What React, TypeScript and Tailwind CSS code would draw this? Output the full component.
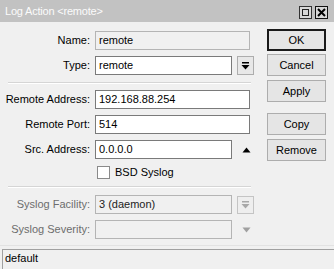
export default function App() {
  const font = { fontFamily: '"Liberation Sans", Arial, sans-serif' }

  const label = "w-[86px] shrink-0 text-right whitespace-nowrap pr-[1px] leading-none"
  const field = "h-[19px] border flex items-center px-[3px] leading-none"

  return (
    <div
      className="w-[334px] h-[269px] bg-[#f0f0f0] text-[11px] text-black flex flex-col overflow-hidden"
      style={font}
    >
      {/* title bar */}
      <div className="h-[22px] bg-[#c2c2c2] flex items-center pl-[5px] pr-[6px] shrink-0">
        <span className="text-[11px] text-[#fbfbfb] tracking-[-0.2px]">Log Action &lt;remote&gt;</span>
        <div className="ml-auto flex gap-[3px] pt-[2px]">
          <div className="w-[13px] h-[13px] border border-[#333] bg-[#d8d8d8] flex items-center justify-center">
            <div className="w-[7px] h-[7px] border border-[#222]" />
          </div>
          <div className="w-[13px] h-[13px] border border-[#111] bg-[#d8d8d8] flex items-center justify-center">
            <svg width="9" height="9" viewBox="0 0 9 9">
              <path d="M1 1L8 8M8 1L1 8" stroke="#000" strokeWidth="2" />
            </svg>
          </div>
        </div>
      </div>

      <div className="flex flex-1">
        {/* form */}
        <div className="w-[258px] pl-[5px] pt-[9px] flex flex-col">
          <div className="flex items-center gap-[4px]">
            <span className={label}>Name:</span>
            <div className={`${field} w-[155px] bg-[#f0f0f0] border-[#b4b4b4]`}>remote</div>
          </div>
          <div className="flex items-center gap-[4px] mt-[6px]">
            <span className={label}>Type:</span>
            <div className={`${field} w-[137px] bg-white border-[#7a7a7a]`}>remote</div>
            <div className="ml-[1px] w-[17px] h-[19px] border border-[#adadad] bg-[#e8e8e8] flex items-center justify-center">
              <svg width="9" height="8" viewBox="0 0 9 8">
                <rect x="1" y="0" width="7" height="1.5" fill="#000" />
                <path d="M0.5 3H8.5L4.5 7.5Z" fill="#000" />
              </svg>
            </div>
          </div>

          <div className="mt-[7px] ml-[3px] mr-[7px] border-t border-[#d5d5d5] border-b border-b-white" />

          <div className="flex items-center gap-[4px] mt-[6px]">
            <span className={label}>Remote Address:</span>
            <div className={`${field} w-[155px] bg-white border-[#7a7a7a]`}>192.168.88.254</div>
          </div>
          <div className="flex items-center gap-[4px] mt-[6px]">
            <span className={label}>Remote Port:</span>
            <div className={`${field} w-[155px] bg-white border-[#7a7a7a]`}>514</div>
          </div>
          <div className="flex items-center gap-[4px] mt-[6px]">
            <span className={label}>Src. Address:</span>
            <div className={`${field} w-[137px] bg-white border-[#7a7a7a]`}>0.0.0.0</div>
            <div className="w-[18px] flex justify-center pl-[3px]">
              <svg width="9" height="6" viewBox="0 0 9 6">
                <path d="M0.5 5.5H8.5L4.5 0.5Z" fill="#000" />
              </svg>
            </div>
          </div>
          <div className="flex items-center gap-[5px] mt-[7px] pl-[92px]">
            <div className="w-[13px] h-[13px] border border-[#8a8a8a] bg-white" />
            <span className="leading-none">BSD Syslog</span>
          </div>

          <div className="mt-[7px] ml-[3px] mr-[7px] border-t border-[#d5d5d5] border-b border-b-white" />

          <div className="flex items-center gap-[4px] mt-[7px] text-[#6d6d6d]">
            <span className={label}>Syslog Facility:</span>
            <div className={`${field} w-[137px] bg-[#f0f0f0] border-[#b4b4b4] text-[#222]`}>3 (daemon)</div>
            <div className="ml-[1px] w-[17px] h-[18px] border border-[#c4c4c4] bg-[#eeeeee] flex items-center justify-center">
              <svg width="9" height="8" viewBox="0 0 9 8">
                <rect x="1" y="0" width="7" height="1.5" fill="#a8a8a8" />
                <path d="M0.5 3H8.5L4.5 7.5Z" fill="#a8a8a8" />
              </svg>
            </div>
          </div>
          <div className="flex items-center gap-[4px] mt-[6px] text-[#6d6d6d]">
            <span className={label}>Syslog Severity:</span>
            <div className={`${field} w-[137px] bg-[#f0f0f0] border-[#b4b4b4]`} />
            <div className="w-[18px] flex justify-center pl-[2px]">
              <svg width="9" height="6" viewBox="0 0 9 6">
                <path d="M0.5 0.5H8.5L4.5 5.5Z" fill="#a0a0a0" />
              </svg>
            </div>
          </div>
        </div>

        {/* buttons */}
        <div className="pl-[9px] pt-[7px] flex flex-col">
          <button className="w-[59px] h-[22px] border-2 border-[#1a1a1a] bg-[#e5e5e5] leading-none">OK</button>
          <button className="w-[59px] h-[22px] mt-[3px] border border-[#adadad] bg-[#e5e5e5] leading-none">Cancel</button>
          <button className="w-[59px] h-[22px] mt-[4px] border border-[#adadad] bg-[#e5e5e5] leading-none">Apply</button>
          <button className="w-[59px] h-[22px] mt-[11px] border border-[#adadad] bg-[#e5e5e5] leading-none">Copy</button>
          <button className="w-[59px] h-[22px] mt-[4px] border border-[#adadad] bg-[#e5e5e5] leading-none">Remove</button>
        </div>
      </div>

      {/* status bar */}
      <div className="h-[24px] shrink-0 border-t border-[#e2e2e2] pt-[3px] pl-[2px]">
        <div className="h-full border-t border-l border-[#a0a0a0] pl-[2px] pt-[3px] leading-none">default</div>
      </div>
    </div>
  )
}
